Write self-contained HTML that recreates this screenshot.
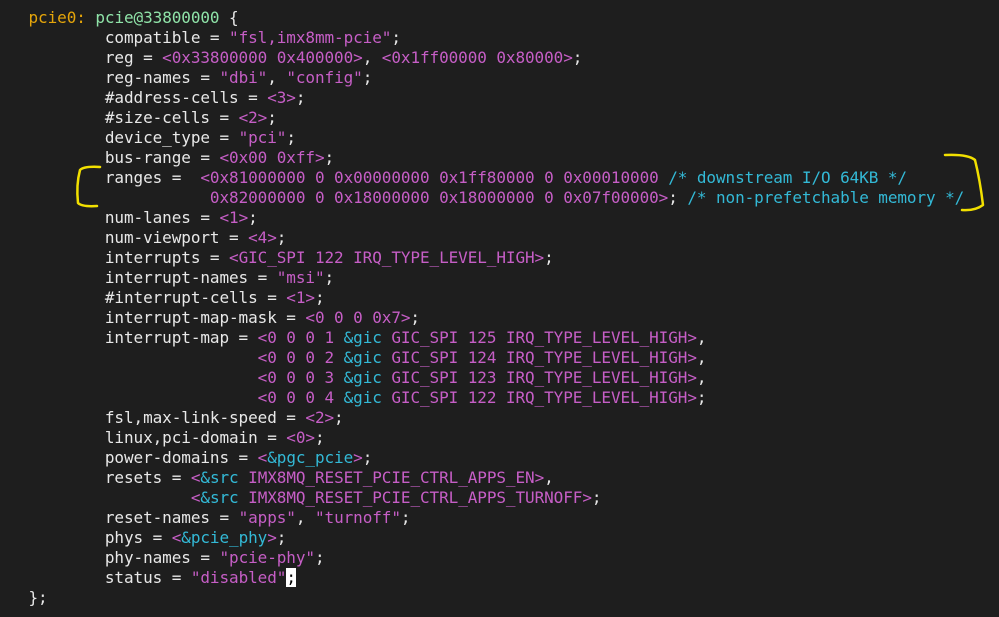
<!DOCTYPE html>
<html><head><meta charset="utf-8"><style>
html,body{margin:0;padding:0;background:#1e1e1e;width:999px;height:617px;overflow:hidden}
pre{position:absolute;left:28.5px;top:8px;margin:0;font-family:"DejaVu Sans Mono","Liberation Mono",monospace;font-size:16px;letter-spacing:-0.085px;line-height:20px;color:#e8e8e8;white-space:pre}
.l{color:#e5a50a}.n{color:#8fe3a8}.p{color:#c65ec6}.c{color:#33b9d6}.r{color:#33b9d6}
.cur{background:#fff;color:#000}
svg{position:absolute;left:0;top:0}
</style></head><body>
<pre><span class="l">pcie0:</span> <span class="n">pcie@33800000</span> {
        compatible = <span class="p">"fsl,imx8mm-pcie"</span>;
        reg = <span class="p">&lt;0x33800000 0x400000&gt;</span>, <span class="p">&lt;0x1ff00000 0x80000&gt;</span>;
        reg-names = <span class="p">"dbi"</span>, <span class="p">"config"</span>;
        #address-cells = <span class="p">&lt;3&gt;</span>;
        #size-cells = <span class="p">&lt;2&gt;</span>;
        device_type = <span class="p">"pci"</span>;
        bus-range = <span class="p">&lt;0x00 0xff&gt;</span>;
        ranges =  <span class="p">&lt;0x81000000 0 0x00000000 0x1ff80000 0 0x00010000</span> <span class="c">/* downstream I/O 64KB */</span>
                   <span class="p">0x82000000 0 0x18000000 0x18000000 0 0x07f00000&gt;</span>; <span class="c">/* non-prefetchable memory */</span>
        num-lanes = <span class="p">&lt;1&gt;</span>;
        num-viewport = <span class="p">&lt;4&gt;</span>;
        interrupts = <span class="p">&lt;GIC_SPI 122 IRQ_TYPE_LEVEL_HIGH&gt;</span>;
        interrupt-names = <span class="p">"msi"</span>;
        #interrupt-cells = <span class="p">&lt;1&gt;</span>;
        interrupt-map-mask = <span class="p">&lt;0 0 0 0x7&gt;</span>;
        interrupt-map = <span class="p">&lt;0 0 0 1 </span><span class="r">&amp;gic</span><span class="p"> GIC_SPI 125 IRQ_TYPE_LEVEL_HIGH&gt;</span>,
                        <span class="p">&lt;0 0 0 2 </span><span class="r">&amp;gic</span><span class="p"> GIC_SPI 124 IRQ_TYPE_LEVEL_HIGH&gt;</span>,
                        <span class="p">&lt;0 0 0 3 </span><span class="r">&amp;gic</span><span class="p"> GIC_SPI 123 IRQ_TYPE_LEVEL_HIGH&gt;</span>,
                        <span class="p">&lt;0 0 0 4 </span><span class="r">&amp;gic</span><span class="p"> GIC_SPI 122 IRQ_TYPE_LEVEL_HIGH&gt;</span>;
        fsl,max-link-speed = <span class="p">&lt;2&gt;</span>;
        linux,pci-domain = <span class="p">&lt;0&gt;</span>;
        power-domains = <span class="p">&lt;</span><span class="r">&amp;pgc_pcie</span><span class="p">&gt;</span>;
        resets = <span class="p">&lt;</span><span class="r">&amp;src</span><span class="p"> IMX8MQ_RESET_PCIE_CTRL_APPS_EN&gt;</span>,
                 <span class="p">&lt;</span><span class="r">&amp;src</span><span class="p"> IMX8MQ_RESET_PCIE_CTRL_APPS_TURNOFF&gt;</span>;
        reset-names = <span class="p">"apps"</span>, <span class="p">"turnoff"</span>;
        phys = <span class="p">&lt;</span><span class="r">&amp;pcie_phy</span><span class="p">&gt;</span>;
        phy-names = <span class="p">"pcie-phy"</span>;
        status = <span class="p">"disabled"</span><span class="cur">;</span>
};</pre>
<svg width="999" height="617"><g fill="none" stroke="#f2e000" stroke-width="2.5" stroke-linecap="round" stroke-linejoin="round">
<path d="M100 167 Q84 166 80 170 Q76 185 78 203 Q82 207 97 206"/>
<path d="M945 155 Q968 154 975 160 Q980 180 983 205 Q975 211 962 210"/>
</g></svg>
</body></html>
